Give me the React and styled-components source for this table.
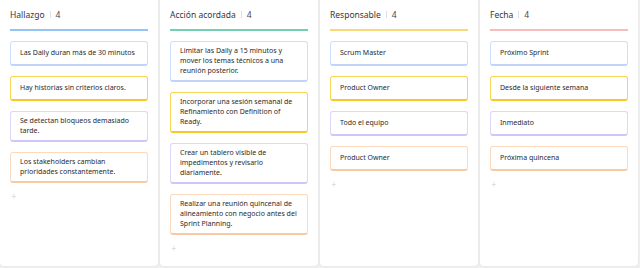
import React from "react";
import styled, { createGlobalStyle } from "styled-components";

const Global = createGlobalStyle`
  html, body { margin: 0; padding: 0; background: #efeff0; }
  body { font-family: "Noto Sans", "Open Sans", sans-serif; }
  * { box-sizing: border-box; }
`;

const Board = styled.div`
  display: flex;
  gap: 2px;
  width: 640px;
  height: 268px;
  overflow: hidden;
  background: #efeff0;
`;

const Column = styled.section`
  flex: 0 0 158px;
  height: 266px;
  background: #fff;
  border-radius: 0 0 4px 4px;
  box-shadow: 0 0 2px rgba(0, 0, 0, 0.07);
  padding: 8px 10px 0;
  display: flex;
  flex-direction: column;
`;

const Header = styled.header`
  display: flex;
  align-items: center;
  gap: 5px;
  height: 12px;
  font-size: 8.5px;
  color: #363636;
`;

const Divider = styled.span`
  width: 1px;
  height: 7px;
  background: #e0e0e0;
`;

const Count = styled.span`
  color: #4a4a4a;
`;

const Underline = styled.div`
  height: 1.5px;
  margin-top: 9px;
  background: ${(p) => p.$color};
`;

const Cards = styled.div`
  display: flex;
  flex-direction: column;
  gap: 9.5px;
  margin-top: 10px;
`;

const Card = styled.div`
  display: flex;
  align-items: center;
  min-height: 25.5px;
  padding: 4px 9px 4.5px 9px;
  background: #fff;
  border: 1px solid ${(p) => p.$tone.border};
  border-bottom: 2.5px solid ${(p) => p.$tone.bottom};
  border-radius: 3px;
  font-size: 7px;
  line-height: 10px;
  color: #2a2a2a;
`;

const Add = styled.div`
  margin-top: 7px;
  padding-left: 1px;
  font-size: 10px;
  line-height: 12px;
  color: #cfcfcf;
  font-weight: 300;
`;

const tones = [
  { border: "#cddffd", bottom: "#bfd4fb" },
  { border: "#f8d653", bottom: "#f4c928" },
  { border: "#dcd7fb", bottom: "#cfc6f9" },
  { border: "#fbd9bf", bottom: "#f8caa3" },
];

const columns = [
  {
    title: "Hallazgo",
    color: "#94c3f6",
    items: [
      "Las Daily duran más de 30 minutos",
      "Hay historias sin criterios claros.",
      "Se detectan bloqueos demasiado tarde.",
      "Los stakeholders cambian prioridades constantemente.",
    ],
  },
  {
    title: "Acción acordada",
    color: "#72cfb0",
    items: [
      "Limitar las Daily a 15 minutos y mover los temas técnicos a una reunión posterior.",
      "Incorporar una sesión semanal de Refinamiento con Definition of Ready.",
      "Crear un tablero visible de impedimentos y revisarlo diariamente.",
      "Realizar una reunión quincenal de alineamiento con negocio antes del Sprint Planning.",
    ],
  },
  {
    title: "Responsable",
    color: "#f8d877",
    items: ["Scrum Master", "Product Owner", "Todo el equipo", "Product Owner"],
  },
  {
    title: "Fecha",
    color: "#f9bcbc",
    items: [
      "Próximo Sprint",
      "Desde la siguiente semana",
      "Inmediato",
      "Próxima quincena",
    ],
  },
];

export default function App() {
  return (
    <>
      <Global />
      <Board>
        {columns.map((col) => (
          <Column key={col.title}>
            <Header>
              <span>{col.title}</span>
              <Divider />
              <Count>{col.items.length}</Count>
            </Header>
            <Underline $color={col.color} />
            <Cards>
              {col.items.map((t, i) => (
                <Card key={i} $tone={tones[i]}>
                  {t}
                </Card>
              ))}
            </Cards>
            <Add>+</Add>
          </Column>
        ))}
      </Board>
    </>
  );
}
